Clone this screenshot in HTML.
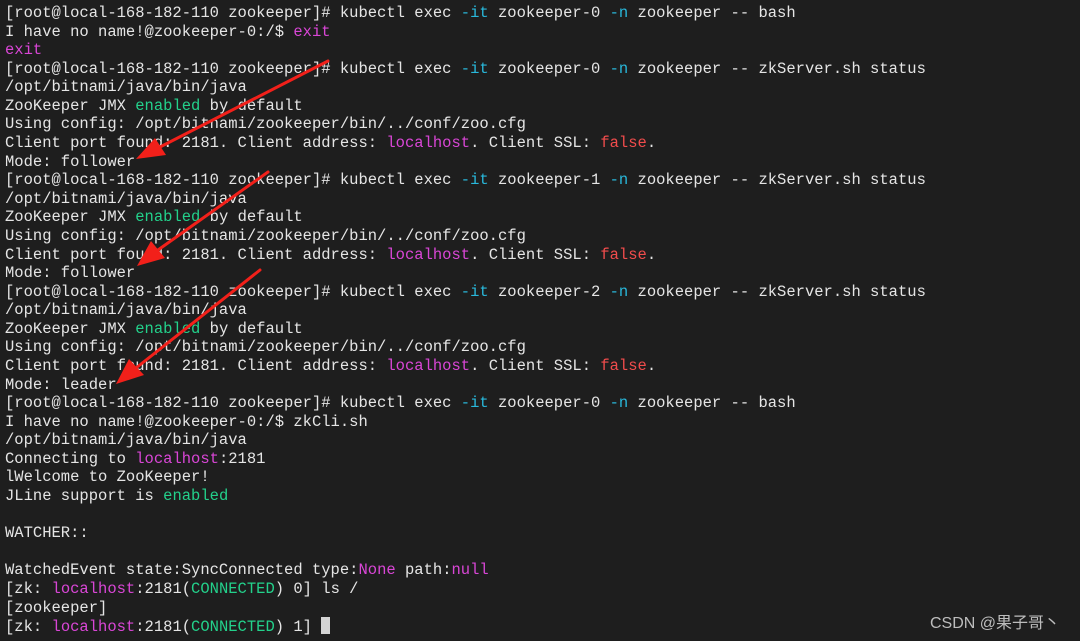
<!DOCTYPE html>
<html><head><meta charset="utf-8"><style>
html,body{margin:0;padding:0;background:#1e1e1e;width:1080px;height:641px;overflow:hidden;}
pre{margin:0;position:absolute;left:5px;top:4px;font-family:"Liberation Mono","DejaVu Sans Mono",monospace;font-size:15.5px;line-height:18.58px;color:#e5e5e5;}
.m{color:#d946d6}.g{color:#23d18b}.r{color:#f14c4c}.c{color:#29b8db}
.cur{display:inline-block;width:9px;height:17px;background:#d4d4d4;vertical-align:-3px}
.wm{position:absolute;right:20px;top:609px;font-family:"Liberation Sans","Noto Sans CJK SC",sans-serif;font-size:16px;color:#bdbdbd}
svg{position:absolute;left:0;top:0}
</style></head><body>
<pre>[root@local-168-182-110 zookeeper]# kubectl exec <span class="c">-it</span> zookeeper-0 <span class="c">-n</span> zookeeper -- bash
I have no name!@zookeeper-0:/$ <span class="m">exit</span>
<span class="m">exit</span>
[root@local-168-182-110 zookeeper]# kubectl exec <span class="c">-it</span> zookeeper-0 <span class="c">-n</span> zookeeper -- zkServer.sh status
/opt/bitnami/java/bin/java
ZooKeeper JMX <span class="g">enabled</span> by default
Using config: /opt/bitnami/zookeeper/bin/../conf/zoo.cfg
Client port found: 2181. Client address: <span class="m">localhost</span>. Client SSL: <span class="r">false</span>.
Mode: follower
[root@local-168-182-110 zookeeper]# kubectl exec <span class="c">-it</span> zookeeper-1 <span class="c">-n</span> zookeeper -- zkServer.sh status
/opt/bitnami/java/bin/java
ZooKeeper JMX <span class="g">enabled</span> by default
Using config: /opt/bitnami/zookeeper/bin/../conf/zoo.cfg
Client port found: 2181. Client address: <span class="m">localhost</span>. Client SSL: <span class="r">false</span>.
Mode: follower
[root@local-168-182-110 zookeeper]# kubectl exec <span class="c">-it</span> zookeeper-2 <span class="c">-n</span> zookeeper -- zkServer.sh status
/opt/bitnami/java/bin/java
ZooKeeper JMX <span class="g">enabled</span> by default
Using config: /opt/bitnami/zookeeper/bin/../conf/zoo.cfg
Client port found: 2181. Client address: <span class="m">localhost</span>. Client SSL: <span class="r">false</span>.
Mode: leader
[root@local-168-182-110 zookeeper]# kubectl exec <span class="c">-it</span> zookeeper-0 <span class="c">-n</span> zookeeper -- bash
I have no name!@zookeeper-0:/$ zkCli.sh
/opt/bitnami/java/bin/java
Connecting to <span class="m">localhost</span>:2181
lWelcome to ZooKeeper!
JLine support is <span class="g">enabled</span>

WATCHER::

WatchedEvent state:SyncConnected type:<span class="m">None</span> path:<span class="m">null</span>
[zk: <span class="m">localhost</span>:2181(<span class="g">CONNECTED</span>) 0] ls /
[zookeeper]
[zk: <span class="m">localhost</span>:2181(<span class="g">CONNECTED</span>) 1] <span class="cur"></span></pre>
<svg width="1080" height="641" viewBox="0 0 1080 641">
<g stroke="#f2201a" stroke-width="3" fill="#f2201a" stroke-linecap="round">
<line x1="328" y1="61" x2="160" y2="147"/>
<polygon stroke="none" points="136,159 155,138 166,155"/>
<line x1="268" y1="172" x2="158" y2="250"/>
<polygon stroke="none" points="137,266 151,241 165,258"/>
<line x1="260" y1="270" x2="136" y2="368"/>
<polygon stroke="none" points="116,384 129,359 144,375"/>
</g>
</svg>
<div class="wm">CSDN @果子哥丶</div>
</body></html>
